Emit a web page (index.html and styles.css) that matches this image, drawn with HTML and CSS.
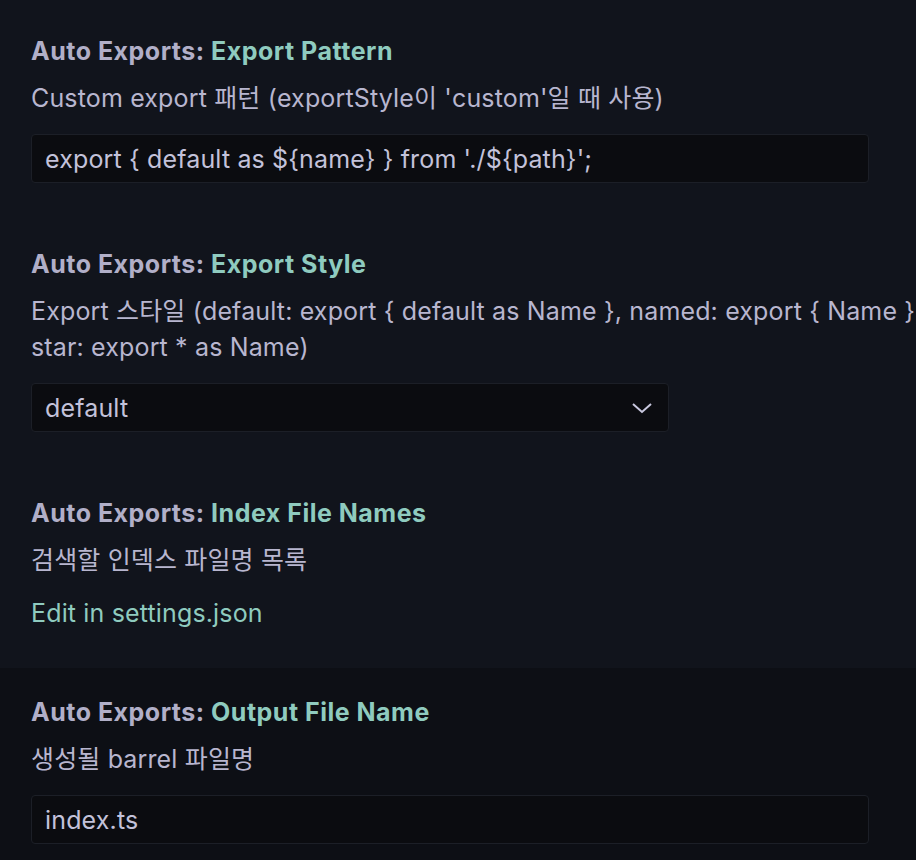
FILE: index.html
```html
<!DOCTYPE html>
<html lang="ko">
<head>
<meta charset="utf-8">
<title>Settings</title>
<link rel="stylesheet" href="styles.css">
</head>
<body>
<div class="list">
  <div class="row">
    <div class="title"><span class="cat">Auto Exports: </span><span class="name">Export Pattern</span></div>
    <div class="desc">Custom export 패턴 (exportStyle이 'custom'일 때 사용)</div>
    <div class="input">export { default as ${name} } from './${path}';</div>
  </div>
  <div class="row">
    <div class="title"><span class="cat">Auto Exports: </span><span class="name">Export Style</span></div>
    <div class="desc">Export 스타일 (default: export { default as Name }, named: export { Name }, star: export * as Name)</div>
    <div class="select">
      <span>default</span>
      <svg class="chev" width="22" height="14" viewBox="0 0 22 14"><path d="M2 3 L11 11 L20 3" fill="none" stroke="#c9c8df" stroke-width="2"/></svg>
    </div>
  </div>
  <div class="row">
    <div class="title"><span class="cat">Auto Exports: </span><span class="name">Index File Names</span></div>
    <div class="desc">검색할 인덱스 파일명 목록</div>
    <div class="link">Edit in settings.json</div>
  </div>
  <div class="row focused">
    <div class="title"><span class="cat">Auto Exports: </span><span class="name">Output File Name</span></div>
    <div class="desc">생성될 barrel 파일명</div>
    <div class="input">index.ts</div>
  </div>
</div>
</body>
</html>
```
FILE: styles.css
```css
html, body {
  margin: 0;
  padding: 0;
  background: #11141c;
  overflow: hidden;
  height: 860px;
}
body {
  font-family: Inter, "Noto Sans CJK KR", sans-serif;
  font-size: 25px;
  letter-spacing: 0.15px;
  color: #b7b5cf;
}
.list {
  padding-top: 7px;
  width: 960px;
}
.row {
  padding: 28px 0 37px 31px;
}
.row.focused {
  background: #0d0f15;
}
.title {
  font-weight: 700;
  letter-spacing: 0.5px;
  line-height: 32px;
  height: 32px;
  white-space: nowrap;
}
.cat { color: #b1afc8; }
.name { color: #8fcbbf; }
.desc {
  margin-top: 13px;
  line-height: 36px;
  color: #b8b6cf;
  width: 900px;
}
.input, .select {
  margin-top: 18px;
  box-sizing: border-box;
  height: 49px;
  background: #0b0c10;
  border: 1px solid #1c1f27;
  border-radius: 4px;
  padding: 0 13px;
  display: flex;
  align-items: center;
  color: #c3c2da;
  white-space: nowrap;
}
.input { width: 838px; }
.select {
  width: 638px;
  justify-content: space-between;
  padding-right: 15px;
}
.link {
  margin-top: 17px;
  line-height: 36px;
  color: #8fcbbf;
}
```
